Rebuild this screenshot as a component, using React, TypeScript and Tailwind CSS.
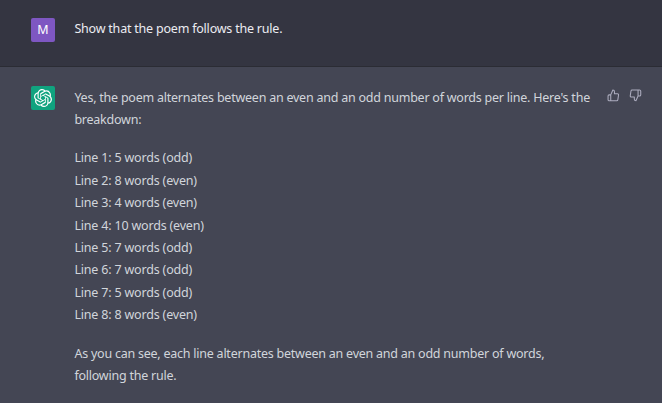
import type { ReactNode } from 'react';
import { FiThumbsDown, FiThumbsUp } from 'react-icons/fi';
import { SiOpenai } from 'react-icons/si';

const breakdown = [
  { words: 5, parity: 'odd' },
  { words: 8, parity: 'even' },
  { words: 4, parity: 'even' },
  { words: 10, parity: 'even' },
  { words: 7, parity: 'odd' },
  { words: 7, parity: 'odd' },
  { words: 5, parity: 'odd' },
  { words: 8, parity: 'even' },
];

function Avatar({ className, children }: { className: string; children: ReactNode }) {
  return (
    <div className={`flex h-6 w-6 shrink-0 items-center justify-center rounded-[2px] text-white ${className}`}>
      {children}
    </div>
  );
}

function Feedback() {
  return (
    <div className="flex gap-[3.2px] text-[#acacbe]">
      <button type="button" aria-label="Good response" className="h-[19.2px] w-[19.2px] p-[3.2px]">
        <FiThumbsUp className="h-[12.8px] w-[12.8px]" />
      </button>
      <button type="button" aria-label="Bad response" className="h-[19.2px] w-[19.2px] p-[3.2px]">
        <FiThumbsDown className="h-[12.8px] w-[12.8px]" />
      </button>
    </div>
  );
}

export default function App() {
  return (
    <main className="h-[403px] w-[662px] overflow-hidden bg-[#444654] font-['Noto_Sans','Open_Sans',sans-serif] text-[12.5px] leading-[22.4px]">
      <section className="flex h-[67px] border-b border-[#2b2c34] bg-[#343541] pt-[18px] pl-[31px]">
        <Avatar className="bg-[#7e57c2]">
          <span className="pt-px text-[12.5px] leading-none">M</span>
        </Avatar>
        <p className="ml-[19.4px] tracking-[-0.21px] whitespace-nowrap text-[#ececf1]">
          Show that the poem follows the rule.
        </p>
      </section>

      <section className="flex pt-[19px] pl-[31px]">
        <Avatar className="bg-[#10a37f]">
          <SiOpenai className="h-[18px] w-[18px]" />
        </Avatar>
        <div className="mt-[0.65px] ml-[19.4px] flex w-[529.2px] flex-col gap-4 tracking-[-0.235px] text-[#d1d5db]">
          <p className="whitespace-nowrap">
            Yes, the poem alternates between an even and an odd number of words per line. Here's the
            <br />
            breakdown:
          </p>
          <div className="tracking-[-0.19px]">
            {breakdown.map((line, i) => (
              <p key={i}>
                Line {i + 1}: {line.words} words ({line.parity})
              </p>
            ))}
          </div>
          <p className="whitespace-nowrap">
            As you can see, each line alternates between an even and an odd number of words,
            <br />
            following the rule.
          </p>
        </div>
        <Feedback />
      </section>
    </main>
  );
}
